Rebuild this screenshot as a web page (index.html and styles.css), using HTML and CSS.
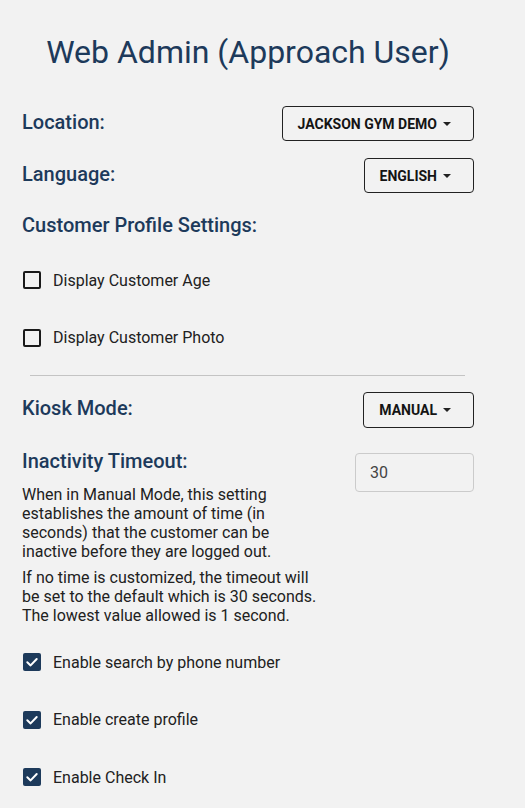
FILE: index.html
```html
<!DOCTYPE html>
<html lang="en">
<head>
<meta charset="utf-8">
<title>Web Admin</title>
<link rel="stylesheet" href="styles.css">
</head>
<body>
<main class="page">
  <h1 class="title">Web Admin (Approach User)</h1>

  <div class="row row-first">
    <span class="label">Location:</span>
    <button class="dropdown">JACKSON GYM DEMO<span class="caret"></span></button>
  </div>

  <div class="row row-second">
    <span class="label">Language:</span>
    <button class="dropdown">ENGLISH<span class="caret"></span></button>
  </div>

  <h2 class="section-label">Customer Profile Settings:</h2>

  <div class="checks checks-profile">
    <label class="check">
      <span class="box"></span>
      <span class="check-text">Display Customer Age</span>
    </label>
    <label class="check">
      <span class="box"></span>
      <span class="check-text">Display Customer Photo</span>
    </label>
  </div>

  <hr class="divider">

  <div class="row row-kiosk">
    <span class="label">Kiosk Mode:</span>
    <button class="dropdown">MANUAL<span class="caret"></span></button>
  </div>

  <div class="timeout">
    <div class="timeout-text">
      <h2 class="section-label timeout-label">Inactivity Timeout:</h2>
      <p class="desc">When in Manual Mode, this setting establishes the amount of time (in seconds) that the customer can be inactive before they are logged out.</p>
      <p class="desc desc-second">If no time is customized, the timeout will be set to the default which is 30 seconds. The lowest value allowed is 1 second.</p>
    </div>
    <div class="number-input">30</div>
  </div>

  <div class="checks checks-kiosk">
    <label class="check">
      <span class="box box-on"><svg viewBox="0 0 18 18" width="18" height="18"><path d="M4.3 9.3 L7.6 12.4 L13.7 6" fill="none" stroke="#fff" stroke-width="2" stroke-linecap="round" stroke-linejoin="round"/></svg></span>
      <span class="check-text">Enable search by phone number</span>
    </label>
    <label class="check">
      <span class="box box-on"><svg viewBox="0 0 18 18" width="18" height="18"><path d="M4.3 9.3 L7.6 12.4 L13.7 6" fill="none" stroke="#fff" stroke-width="2" stroke-linecap="round" stroke-linejoin="round"/></svg></span>
      <span class="check-text">Enable create profile</span>
    </label>
    <label class="check">
      <span class="box box-on"><svg viewBox="0 0 18 18" width="18" height="18"><path d="M4.3 9.3 L7.6 12.4 L13.7 6" fill="none" stroke="#fff" stroke-width="2" stroke-linecap="round" stroke-linejoin="round"/></svg></span>
      <span class="check-text">Enable Check In</span>
    </label>
  </div>
</main>
</body>
</html>
```

FILE: styles.css
```css
html, body {
  margin: 0;
  padding: 0;
  background: #f2f2f2;
}

body {
  font-family: Roboto, "Liberation Sans", Arial, sans-serif;
  color: #212121;
}

.page {
  width: 452px;
  padding: 33px 0 0 22px;
}

.title {
  margin: 0;
  font-size: 32px;
  line-height: 38px;
  font-weight: 400;
  color: #1d3a5b;
  text-align: center;
}

.row {
  display: flex;
  align-items: baseline;
  justify-content: space-between;
}

.row-first {
  margin-top: 35px;
}

.row-second {
  margin-top: 17px;
}

.label,
.section-label {
  font-size: 20px;
  line-height: 24px;
  font-weight: 500;
  color: #1d3a5b;
}

.section-label {
  margin: 20px 0 0;
}

.dropdown {
  display: inline-flex;
  align-items: center;
  box-sizing: border-box;
  height: 35px;
  padding: 0 22px 0 15px;
  border: 1px solid #222;
  border-radius: 4px;
  background: transparent;
  font-family: Roboto, "Liberation Sans", Arial, sans-serif;
  font-size: 14px;
  font-weight: 700;
  color: #141414;
}

.caret {
  display: inline-block;
  width: 0;
  height: 0;
  margin-left: 6px;
  border-top: 4px solid #222;
  border-left: 4px solid transparent;
  border-right: 4px solid transparent;
}

.checks {
  display: flex;
  flex-direction: column;
  gap: 39.5px;
}

.checks-profile {
  margin-top: 34px;
}

.check {
  display: flex;
  align-items: center;
  gap: 12px;
  padding-left: 1px;
  height: 18px;
}

.box {
  box-sizing: border-box;
  width: 18px;
  height: 18px;
  border: 2px solid #1a1a1a;
  border-radius: 2px;
  flex: none;
}

.box-on {
  border: none;
  background: #1d3a5b;
}

.box-on svg {
  display: block;
}

.check-text {
  font-size: 16px;
  line-height: 19px;
  color: #212121;
}

.divider {
  margin: 28px 9px 0 8px;
  border: none;
  border-top: 1px solid #c4c4c4;
  height: 0;
}

.row-kiosk {
  margin-top: 16px;
}

.row-kiosk .dropdown {
  height: 36px;
}

.timeout {
  display: flex;
  justify-content: space-between;
  align-items: flex-start;
  margin-top: 21px;
}

.timeout-text {
  width: 304px;
}

.timeout-label {
  margin: 0;
}

.desc {
  margin: 12px 0 0;
  font-size: 16px;
  line-height: 19px;
  color: #212121;
}

.desc-second {
  margin-top: 7px;
}

.number-input {
  box-sizing: border-box;
  width: 119px;
  height: 39px;
  margin-top: 4px;
  padding: 0 14px;
  border: 1px solid #cbcbcb;
  border-radius: 4px;
  font-size: 16px;
  line-height: 37px;
  color: #444;
}

.checks-kiosk {
  margin-top: 28.5px;
}
```
